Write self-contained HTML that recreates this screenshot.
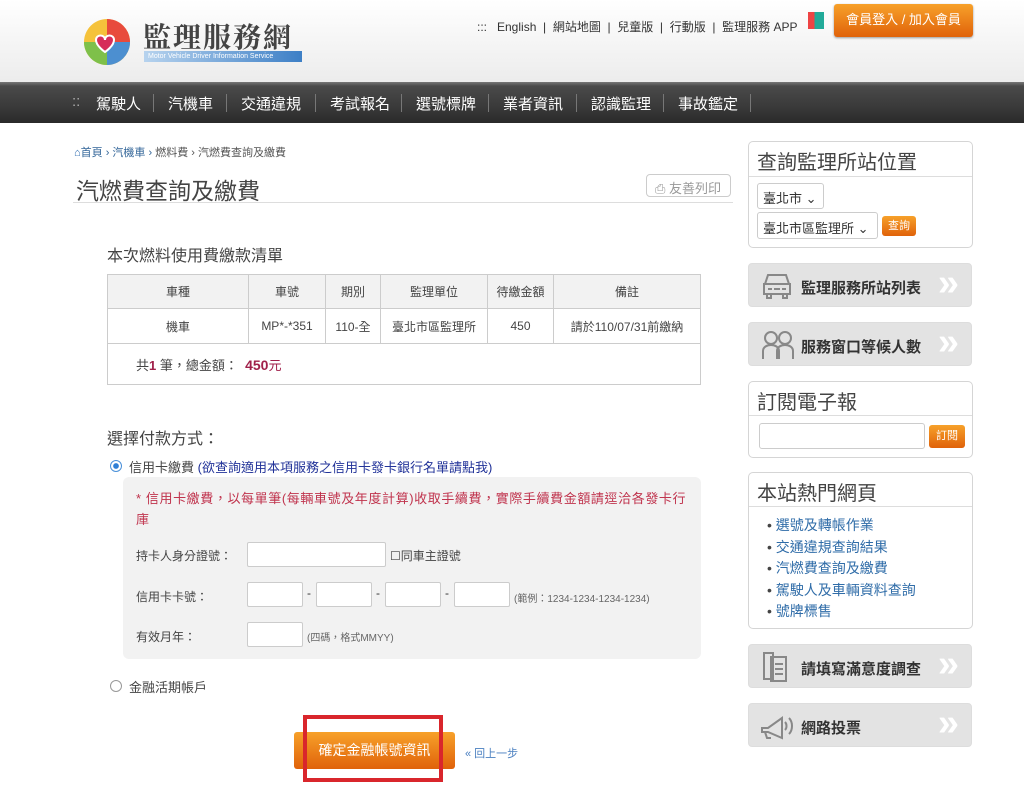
<!DOCTYPE html>
<html><head><meta charset="utf-8"><style>
*{margin:0;padding:0;box-sizing:border-box}
body{width:1024px;height:802px;position:relative;background:#fff;font-family:"Liberation Sans","Noto Sans CJK TC",sans-serif;color:#333;overflow:hidden}
.a{position:absolute;white-space:nowrap}
.hdr{left:0;top:0;width:1024px;height:82px;background:linear-gradient(#fff,#ececec)}
.nav{left:0;top:82px;width:1024px;height:41px;background:linear-gradient(#777 0,#4a4a4a 4px,#3a3a3a 60%,#2a2a2a);color:#fff;font-size:15px}
.nav span{position:absolute;top:11px}
.sep{position:absolute;top:12px;width:1px;height:18px;background:#777}
.box{position:absolute;border:1px solid #d5d5d5;border-radius:5px;background:#fff}
.bt{position:absolute;left:0;right:0;font-size:20px;color:#444;padding-left:8px;border-bottom:1px solid #ddd}
.gb{position:absolute;left:748px;width:224px;height:44px;border:1px solid #ddd;border-radius:4px;background:#e3e3e3;font-size:15px;font-weight:bold;color:#333}
.gb .t{position:absolute;left:52px;top:13px}
.gb .ch{position:absolute;right:12px;top:0px;color:#fff;font-size:38px;font-weight:bold;line-height:38px}
table{position:absolute;left:107px;top:274px;border-collapse:collapse;font-size:12px;color:#444}
td{border:1px solid #ccc;text-align:center;height:35px}
tr.h td{background:#f2f2f2;height:34px}
.in{position:absolute;height:25px;background:#fff;border:1px solid #ccc;border-radius:2px}
.ob{background:linear-gradient(#f7a12a,#e0620a);border-radius:3px;color:#fff;position:absolute;text-align:center}
</style></head><body>
<div class="a hdr"></div>
<svg class="a" style="left:82px;top:16px" width="50" height="52" viewBox="0 0 50 52"><circle cx="25" cy="26" r="23" fill="#f5c23b"/><path d="M25 3A23 23 0 0 1 48 26L25 26Z" fill="#e84b3c"/><path d="M48 26A23 23 0 0 1 25 49L25 26Z" fill="#4c8fd0"/><path d="M25 49A23 23 0 0 1 2 26L25 26Z" fill="#7ec04a"/><path d="M14 24c0-6 9-6 9 0c0-6 9-6 9 0c0 6-9 12-9 12s-9-6-9-12z" fill="#d62d5a" stroke="#fff" stroke-width="2"/></svg>
<div class="a" style="left:143px;top:16px;font-size:28px;font-weight:bold;color:#444;letter-spacing:2px;font-family:'Noto Serif CJK SC',serif">監理服務網</div>
<div class="a" style="left:144px;top:51px;width:158px;height:11px;background:linear-gradient(90deg,#b7d3ee,#3d7fc6);font-size:7px;color:#fff;padding-left:4px;line-height:11px">Motor Vehicle Driver Information Service</div>
<div class="a" style="left:477px;top:18px;font-size:12px;color:#333">:::&nbsp;&nbsp; English &nbsp;|&nbsp; 網站地圖 &nbsp;|&nbsp; 兒童版 &nbsp;|&nbsp; 行動版 &nbsp;|&nbsp; 監理服務 APP</div>
<div class="a" style="left:808px;top:12px;width:16px;height:17px;background:linear-gradient(90deg,#e44 0,#e44 40%,#2a9 40%)"></div>
<div class="ob" style="left:834px;top:4px;width:139px;height:33px;font-size:13px;line-height:32px;box-shadow:0 1px 2px #999">會員登入 / 加入會員</div>
<div class="a nav">
<span style="left:72px;color:#aaa">::</span><span style="left:96px">駕駛人</span><div class="sep" style="left:153px"></div>
<span style="left:168px">汽機車</span><div class="sep" style="left:226px"></div>
<span style="left:241px">交通違規</span><div class="sep" style="left:315px"></div>
<span style="left:330px">考試報名</span><div class="sep" style="left:401px"></div>
<span style="left:416px">選號標牌</span><div class="sep" style="left:488px"></div>
<span style="left:503px">業者資訊</span><div class="sep" style="left:576px"></div>
<span style="left:591px">認識監理</span><div class="sep" style="left:663px"></div>
<span style="left:678px">事故鑑定</span><div class="sep" style="left:750px"></div>
</div>
<div class="a" style="left:74px;top:144px;font-size:11px;color:#336699"><span style="color:#2c6bb0">⌂</span>首頁 › 汽機車 › <span style="color:#555">燃料費 › 汽燃費查詢及繳費</span></div>
<div class="a" style="left:76px;top:172px;font-size:23px;color:#444">汽燃費查詢及繳費</div>
<div class="a" style="left:646px;top:174px;width:85px;height:23px;border:1px solid #ccc;border-radius:4px;font-size:13px;color:#999;padding:3px 0 0 8px">⎙ 友善列印</div>
<div class="a" style="left:73px;top:202px;width:660px;height:1px;background:#ddd"></div>
<div class="a" style="left:107px;top:242px;font-size:16px;color:#444">本次燃料使用費繳款清單</div>
<table>
<tr class="h"><td style="width:141px">車種</td><td style="width:77px">車號</td><td style="width:55px">期別</td><td style="width:107px">監理單位</td><td style="width:66px">待繳金額</td><td style="width:147px">備註</td></tr>
<tr><td>機車</td><td>MP*-*351</td><td>110-全</td><td>臺北市區監理所</td><td>450</td><td>請於110/07/31前繳納</td></tr>
<tr><td colspan="6" style="height:41px;text-align:left;padding-left:28px;font-size:13px">共<b style="color:#a0204a">1</b> 筆，總金額： &nbsp;<b style="color:#a0204a;font-size:14px">450</b><span style="color:#a0204a">元</span></td></tr>
</table>
<div class="a" style="left:107px;top:425px;font-size:16px;color:#444">選擇付款方式：</div>
<div class="a" style="left:110px;top:460px;width:12px;height:12px;border-radius:50%;border:1px solid #4a90d9;background:radial-gradient(#2f7fd6 35%,#fff 45%)"></div>
<div class="a" style="left:129px;top:457px;font-size:13px;color:#444">信用卡繳費 <span style="color:#223399">(欲查詢適用本項服務之信用卡發卡銀行名單請點我)</span></div>
<div class="a" style="left:123px;top:477px;width:578px;height:182px;background:#f2f2f2;border-radius:6px"></div>
<div class="a" style="left:136px;top:488px;font-size:13px;color:#c0334d;line-height:21px;letter-spacing:0.6px">* 信用卡繳費，以每單筆(每輛車號及年度計算)收取手續費，實際手續費金額請逕洽各發卡行<br>庫</div>
<div class="a" style="left:136px;top:547px;font-size:12px;color:#444">持卡人身分證號：</div>
<div class="in" style="left:247px;top:542px;width:139px"></div>
<div class="a" style="left:390px;top:547px;font-size:12px;color:#444">☐同車主證號</div>
<div class="a" style="left:136px;top:588px;font-size:12px;color:#444">信用卡卡號：</div>
<div class="in" style="left:247px;top:582px;width:56px"></div><div class="a" style="left:307px;top:586px;font-size:12px">-</div>
<div class="in" style="left:316px;top:582px;width:56px"></div><div class="a" style="left:376px;top:586px;font-size:12px">-</div>
<div class="in" style="left:385px;top:582px;width:56px"></div><div class="a" style="left:445px;top:586px;font-size:12px">-</div>
<div class="in" style="left:454px;top:582px;width:56px"></div>
<div class="a" style="left:514px;top:590px;font-size:10px;color:#666">(範例：1234-1234-1234-1234)</div>
<div class="a" style="left:136px;top:628px;font-size:12px;color:#444">有效月年：</div>
<div class="in" style="left:247px;top:622px;width:56px"></div>
<div class="a" style="left:307px;top:629px;font-size:10px;color:#666">(四碼，格式MMYY)</div>
<div class="a" style="left:110px;top:680px;width:12px;height:12px;border-radius:50%;border:1px solid #999"></div>
<div class="a" style="left:129px;top:677px;font-size:13px;color:#444">金融活期帳戶</div>
<div class="ob" style="left:294px;top:732px;width:161px;height:37px;font-size:14px;line-height:37px">確定金融帳號資訊</div>
<div class="a" style="left:303px;top:715px;width:140px;height:67px;border:4px solid #d9262c"></div>
<div class="a" style="left:465px;top:745px;font-size:11px;color:#4a7fc0">« 回上一步</div>

<div class="box" style="left:748px;top:141px;width:225px;height:107px"><div class="bt" style="top:4px;height:31px">查詢監理所站位置</div>
<div class="a" style="left:8px;top:41px;width:67px;height:26px;border:1px solid #ccc;border-radius:3px;font-size:13px;padding:4px 5px">臺北市 ⌄</div>
<div class="a" style="left:8px;top:70px;width:121px;height:27px;border:1px solid #ccc;border-radius:3px;font-size:13px;padding:5px 5px">臺北市區監理所 ⌄</div>
<div class="ob" style="left:133px;top:74px;width:34px;height:20px;font-size:11px;line-height:20px">查詢</div></div>
<div class="gb" style="top:263px"><svg class="a" style="left:12px;top:7px" width="32" height="30" viewBox="0 0 32 30" fill="none" stroke="#888" stroke-width="2"><path d="M7 4h18l3 9H4z M3 13h26v10H3z M6 23v4h4v-4M22 23v4h4v-4M7 18h4M21 18h4M13 18h6"/></svg><span class="t">監理服務所站列表</span><span class="ch">»</span></div>
<div class="gb" style="top:322px"><svg class="a" style="left:12px;top:6px" width="34" height="32" viewBox="0 0 34 32" fill="none" stroke="#888" stroke-width="2"><circle cx="10" cy="9" r="6"/><circle cx="24" cy="9" r="6"/><path d="M2 30v-8c0-4 4-6 8-6s8 2 8 6v8M16 30v-8c0-4 4-6 8-6s8 2 8 6v8"/></svg><span class="t">服務窗口等候人數</span><span class="ch">»</span></div>
<div class="box" style="left:748px;top:381px;width:225px;height:77px"><div class="bt" style="top:4px;height:30px">訂閱電子報</div>
<div class="a" style="left:10px;top:41px;width:166px;height:26px;border:1px solid #ccc;border-radius:3px"></div>
<div class="ob" style="left:180px;top:43px;width:36px;height:23px;font-size:11px;line-height:23px">訂閱</div></div>
<div class="box" style="left:748px;top:472px;width:225px;height:157px"><div class="bt" style="top:4px;height:30px">本站熱門網頁</div>
<div class="a" style="left:18px;top:42px;font-size:14px;color:#2f6ca8;line-height:21.5px"><span style="color:#444">•</span> 選號及轉帳作業<br><span style="color:#444">•</span> 交通違規查詢結果<br><span style="color:#444">•</span> 汽燃費查詢及繳費<br><span style="color:#444">•</span> 駕駛人及車輛資料查詢<br><span style="color:#444">•</span> 號牌標售</div></div>
<div class="gb" style="top:644px"><svg class="a" style="left:12px;top:6px" width="30" height="32" viewBox="0 0 30 32" fill="none" stroke="#888" stroke-width="2"><path d="M3 2h9v26H3zM10 6h15v24H10zM14 13h8M14 18h8M14 23h8"/></svg><span class="t">請填寫滿意度調查</span><span class="ch">»</span></div>
<div class="gb" style="top:703px"><svg class="a" style="left:10px;top:8px" width="36" height="28" viewBox="0 0 36 28" fill="none" stroke="#888" stroke-width="2"><path d="M3 16h6l14-10v20L9 20H3zM6 20l2 6h4M26 10c2 2 2 6 0 8M30 6c4 4 4 12 0 16"/></svg><span class="t">網路投票</span><span class="ch">»</span></div>
</body></html>
